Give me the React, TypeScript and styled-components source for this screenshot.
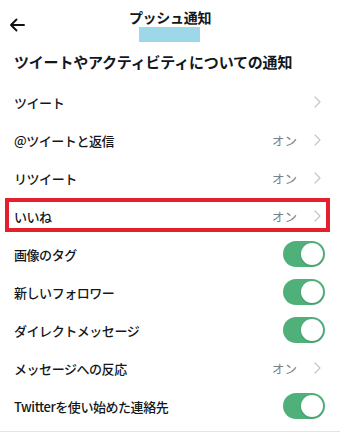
import styled, { createGlobalStyle } from "styled-components";

const GlobalStyle = createGlobalStyle`
  body {
    margin: 0;
    background: #ffffff;
    font-family: "Noto Sans CJK JP", "Noto Sans", "Liberation Sans", sans-serif;
    color: #14171a;
  }
`;

type Item = {
  label: string;
  kind: "link" | "switch";
  value?: string;
  marked?: boolean;
};

const items: Item[] = [
  { label: "ツイート", kind: "link" },
  { label: "@ツイートと返信", kind: "link", value: "オン" },
  { label: "リツイート", kind: "link", value: "オン" },
  { label: "いいね", kind: "link", value: "オン", marked: true },
  { label: "画像のタグ", kind: "switch" },
  { label: "新しいフォロワー", kind: "switch" },
  { label: "ダイレクトメッセージ", kind: "switch" },
  { label: "メッセージへの反応", kind: "link", value: "オン" },
  { label: "Twitterを使い始めた連絡先", kind: "switch" },
];

export default function App() {
  return (
    <>
      <GlobalStyle />
      <Screen>
        <Header>
          <BackButton aria-label="戻る">
            <svg width={16} height={14} viewBox="0 0 16 14" fill="none">
              <path
                d="M15 7H2M7.5 1.5L2 7l5.5 5.5"
                stroke="#111"
                strokeWidth={1.9}
                strokeLinecap="round"
                strokeLinejoin="round"
              />
            </svg>
          </BackButton>
          <TitleBlock>
            <Title>プッシュ通知</Title>
            <Handle />
          </TitleBlock>
        </Header>
        <SectionTitle>ツイートやアクティビティについての通知</SectionTitle>
        <List>
          {items.map((item) => (
            <Row key={item.label} $marked={item.marked}>
              <Label>{item.label}</Label>
              {item.kind === "link" ? (
                <Trail>
                  {item.value && <Value>{item.value}</Value>}
                  <svg width={7} height={12} viewBox="0 0 7 12" fill="none">
                    <path
                      d="M1 1l5 5-5 5"
                      stroke="#c3c6cb"
                      strokeWidth={1.2}
                      strokeLinecap="round"
                      strokeLinejoin="round"
                    />
                  </svg>
                </Trail>
              ) : (
                <Toggle>
                  <Knob />
                </Toggle>
              )}
            </Row>
          ))}
        </List>
        <Divider />
      </Screen>
    </>
  );
}

const Screen = styled.div`
  width: 340px;
  min-height: 443px;
  background: #fff;
`;

const Header = styled.div`
  position: relative;
  height: 48px;
  display: flex;
  justify-content: center;
`;

const BackButton = styled.div`
  position: absolute;
  left: 9px;
  top: 18px;
  display: flex;
`;

const TitleBlock = styled.div`
  display: flex;
  flex-direction: column;
  align-items: center;
  padding-top: 8px;
`;

const Title = styled.div`
  font-size: 14px;
  font-weight: 700;
  line-height: 19px;
  letter-spacing: -0.3px;
`;

const Handle = styled.div`
  width: 61px;
  height: 15px;
  background: #9dd8e9;
`;

const SectionTitle = styled.div`
  font-size: 15px;
  font-weight: 700;
  line-height: 28px;
  padding-left: 14px;
  letter-spacing: -0.2px;
`;

const List = styled.div`
  display: flex;
  flex-direction: column;
  margin-top: 7px;
`;

const Row = styled.div<{ $marked?: boolean }>`
  position: relative;
  height: 38px;
  display: flex;
  align-items: center;
  justify-content: space-between;
  padding: 0 15px 0 14px;

  &::after {
    content: "";
    display: ${(p) => (p.$marked ? "block" : "none")};
    position: absolute;
    left: 5px;
    right: 10px;
    top: 1px;
    bottom: 3px;
    border: 4px solid #e3202b;
  }
`;

const Label = styled.span`
  font-size: 13px;
  font-weight: 500;
  letter-spacing: -0.45px;
`;

const Trail = styled.div`
  display: flex;
  align-items: center;
  gap: 17px;
  padding-right: 4px;
`;

const Value = styled.span`
  font-size: 12.5px;
  color: #7b7f84;
  margin-right: 0;
`;

const Toggle = styled.div`
  width: 42px;
  height: 26px;
  border-radius: 13px;
  background: #4fb07a;
  display: flex;
  align-items: center;
  justify-content: flex-end;
  padding: 0 2px;
  box-sizing: border-box;
`;

const Knob = styled.div`
  width: 22px;
  height: 22px;
  border-radius: 50%;
  background: #fff;
  box-shadow: 0 1px 2px rgba(0, 0, 0, 0.15);
`;

const Divider = styled.div`
  height: 1px;
  background: #e4e4e6;
  margin-top: 6px;
`;
